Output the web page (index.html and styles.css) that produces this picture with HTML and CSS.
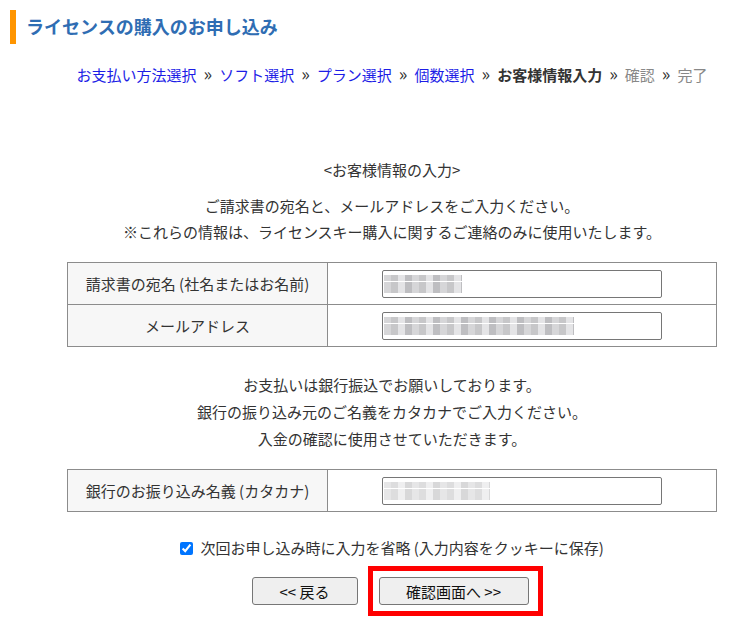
FILE: index.html
```html
<!DOCTYPE html>
<html lang="ja">
<head>
    <meta charset="UTF-8">
    <meta name="viewport" content="width=device-width, initial-scale=1.0">
    <title>ライセンスの購入のお申し込み</title>
    <link rel="stylesheet" href="styles.css">
</head>
<body>
    <h1 class="page-title">ライセンスの購入のお申し込み</h1>

    <div class="main">
        <div class="steps">
            <a href="#">お支払い方法選択</a><span class="sep">»</span><a href="#">ソフト選択</a><span class="sep">»</span><a href="#">プラン選択</a><span class="sep">»</span><a href="#">個数選択</a><span class="sep">»</span><b>お客様情報入力</b><span class="sep">»</span><span class="todo">確認</span><span class="sep">»</span><span class="todo">完了</span>
        </div>

        <form id="customer-form">
            <p class="section-title">&lt;お客様情報の入力&gt;</p>
            <p class="note">ご請求書の宛名と、メールアドレスをご入力ください。<br>※これらの情報は、ライセンスキー購入に関するご連絡のみに使用いたします。</p>

            <table class="info-table">
                <tr>
                    <th>請求書の宛名 (社名またはお名前)</th>
                    <td><span class="field"><input type="text" name="name"><span class="masked short"></span></span></td>
                </tr>
                <tr>
                    <th>メールアドレス</th>
                    <td><span class="field"><input type="email" name="email"><span class="masked long"></span></span></td>
                </tr>
            </table>

            <p class="note note-bank">お支払いは銀行振込でお願いしております。<br>銀行の振り込み元のご名義をカタカナでご入力ください。<br>入金の確認に使用させていただきます。</p>

            <table class="info-table">
                <tr>
                    <th>銀行のお振り込み名義 (カタカナ)</th>
                    <td><span class="field"><input type="text" name="kana"><span class="masked mid"></span></span></td>
                </tr>
            </table>

            <label class="remember"><input type="checkbox" checked> 次回お申し込み時に入力を省略 (入力内容をクッキーに保存)</label>

            <div class="actions">
                <button type="button" class="btn btn-back">&lt;&lt; 戻る</button>
                <span class="highlight"><button type="submit" class="btn btn-next">確認画面へ &gt;&gt;</button></span>
            </div>
        </form>
    </div>
</body>
</html>
```

FILE: styles.css
```css
body {
    margin: 0;
    font-family: 'Noto Sans CJK JP', 'Noto Sans', sans-serif;
    font-size: 15px;
    color: #333;
    background: #fff;
}
.page-title {
    margin: 10px 0 0 10px;
    padding-left: 10px;
    border-left: 6px solid #ff9500;
    height: 34px;
    line-height: 32px;
    font-size: 18px;
    font-weight: bold;
    color: #2f6db3;
}
.main {
    width: 650px;
    margin-left: 67px;
}
.steps {
    margin-top: 19px;
    line-height: 24px;
    text-align: center;
    white-space: nowrap;
}
.steps a {
    color: #1d1de6;
    text-decoration: none;
}
.steps b {
    color: #333;
}
.steps .sep {
    margin: 0 7px;
    font-size: 18px;
    line-height: 15px;
    color: #333;
}
.steps .todo {
    color: #888;
}
.section-title {
    margin: 70px 0 0;
    line-height: 26px;
    text-align: center;
}
.note {
    margin: 10px 0 0;
    line-height: 26px;
    text-align: center;
}
.note-bank {
    margin-top: 24px;
    line-height: 27px;
}
.info-table {
    width: 100%;
    margin-top: 17px;
    border-collapse: collapse;
}
.info-table th,
.info-table td {
    border: 1px solid #8c8c8c;
    height: 41px;
    padding: 0;
}
.info-table th {
    width: 259px;
    background: #f7f7f7;
    font-weight: normal;
    text-align: center;
}
.info-table td {
    text-align: center;
}
.field {
    position: relative;
    display: inline-block;
    vertical-align: middle;
}
.field input {
    display: block;
    width: 280px;
    height: 28px;
    box-sizing: border-box;
    border: 1px solid #767676;
    border-radius: 2px;
    margin: 0;
}
/* blurred values */
.masked {
    position: absolute;
    left: 2px;
    top: 5px;
    height: 18px;
    background:
        linear-gradient(#fff0 0 35%, #fff 35% 40%, #fff0 40%),
        repeating-linear-gradient(90deg, #c9c9cb 0 7px, #b5b5b8 7px 14px, #dcdcde 14px 21px, #a9a9ad 21px 28px);
    opacity: 0.75;
}
.masked.short { width: 78px; }
.masked.long { width: 190px; }
.masked.mid { width: 106px; opacity: 0.45; }
.remember {
    display: block;
    margin-top: 24px;
    line-height: 24px;
    text-align: center;
}
.remember input {
    width: 13px;
    height: 13px;
    margin: 0 4px 0 0;
    vertical-align: -1px;
    accent-color: #0075ff;
}
.actions {
    display: flex;
    justify-content: center;
    align-items: center;
    gap: 10px;
    margin-top: 6px;
    padding-left: 10px;
}
.highlight {
    border: 5px solid #f00;
    padding: 6px 9px 6px 6px;
}
.btn {
    display: block;
    height: 28px;
    border: 1px solid #767676;
    border-radius: 3px;
    background: #efefef;
    font-family: 'Noto Sans CJK JP', sans-serif;
    font-size: 15px;
    color: #111;
    padding: 0;
}
.btn-back { width: 106px; }
.btn-next { width: 150px; }
```
